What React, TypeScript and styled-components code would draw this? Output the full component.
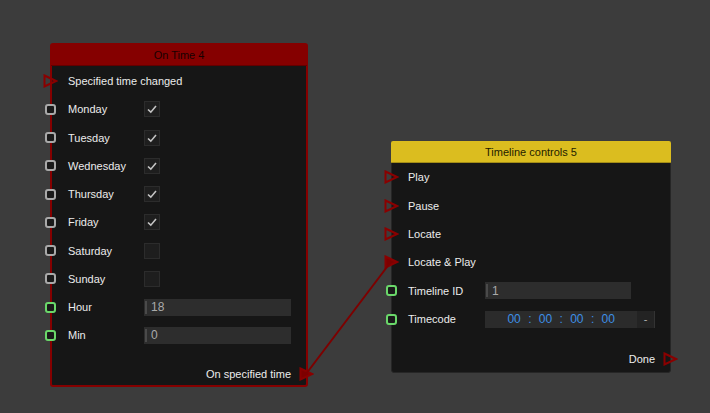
import React from 'react';
import styled, { createGlobalStyle } from 'styled-components';

const GlobalStyle = createGlobalStyle`
  html, body {
    margin: 0;
    padding: 0;
    background: #3c3c3c;
  }
  body {
    font-family: "Liberation Sans", Arial, sans-serif;
    font-size: 11px;
  }
`;

const Canvas = styled.div`
  position: relative;
  width: 710px;
  height: 413px;
  background: #3c3c3c;
  overflow: hidden;
`;

const Node = styled.div<{ $x: number; $y: number; $w: number; $h: number; $border: string; $bw: number }>`
  position: absolute;
  left: ${p => p.$x}px;
  top: ${p => p.$y}px;
  width: ${p => p.$w}px;
  height: ${p => p.$h}px;
  box-sizing: border-box;
  border: ${p => p.$bw}px solid ${p => p.$border};
  border-radius: 3px;
  background: #161616;
  display: flex;
  flex-direction: column;
`;

const Header = styled.div<{ $bg: string; $fg: string }>`
  height: 21px;
  flex: none;
  background: ${p => p.$bg};
  color: ${p => p.$fg};
  display: flex;
  align-items: center;
  justify-content: center;
  font-size: 11px;
  border-bottom: 1px solid rgba(0, 0, 0, 0.25);
  margin: -1px -1px 0;
  border-radius: 2px 2px 0 0;
`;

const Body = styled.div<{ $pt: number }>`
  flex: 1;
  display: flex;
  flex-direction: column;
  padding-top: ${p => p.$pt}px;
`;

const Row = styled.div<{ $h: number }>`
  position: relative;
  height: ${p => p.$h}px;
  flex: none;
  display: flex;
  align-items: center;
  padding-left: 16px;
  color: #ececec;
`;

const Label = styled.div`
  width: 76px;
  flex: none;
  white-space: nowrap;
`;

const OutRow = styled.div<{ $h: number; $pr: number }>`
  position: relative;
  margin-top: auto;
  height: ${p => p.$h}px;
  display: flex;
  align-items: center;
  justify-content: flex-end;
  padding-right: ${p => p.$pr}px;
  color: #ececec;
`;

const InPort = styled.div<{ $dx: number }>`
  position: absolute;
  left: ${p => p.$dx}px;
  top: 50%;
  transform: translateY(-50%);
  width: 15px;
  height: 14px;
  display: flex;
  align-items: center;
  justify-content: center;
`;

const OutPort = styled.div`
  position: absolute;
  right: -8px;
  top: 50%;
  transform: translateY(-50%);
  width: 15px;
  height: 14px;
  display: flex;
  align-items: center;
  justify-content: center;
`;

const Dot = styled.div<{ $color: string }>`
  width: 7px;
  height: 7px;
  border: 2px solid ${p => p.$color};
  border-radius: 3px;
  background: #1a1a1a;
`;

const Check = styled.div`
  width: 14px;
  height: 14px;
  border: 1px solid #2c2c2c;
  background: #1e1e1e;
  display: flex;
  align-items: center;
  justify-content: center;
`;

const Field = styled.div<{ $w: number }>`
  width: ${p => p.$w}px;
  height: 17px;
  background: #2d2d2d;
  display: flex;
  align-items: center;
  color: #aaaaaa;
  font-size: 12px;
  &::before {
    content: '';
    width: 2px;
    height: 13px;
    background: #4a4a4a;
    margin: 0 4px 0 1px;
  }
`;

const TimeBox = styled.div`
  display: flex;
  height: 17px;
  margin-left: 1px;
`;

const TimeDigits = styled.div`
  width: 152px;
  background: #2b2b2b;
  display: flex;
  align-items: center;
  justify-content: center;
  gap: 7.7px;
  color: #3d8fe6;
  font-size: 12px;
`;

const Pair = styled.span`
  width: 13px;
  text-align: center;
`;

const Colon = styled.span`
  width: 3px;
  text-align: center;
`;

const DashBtn = styled.div`
  width: 17px;
  background: #232323;
  border-right: 1px solid #333;
  color: #b0b0b0;
  display: flex;
  align-items: center;
  justify-content: center;
`;

const Wires = styled.svg`
  position: absolute;
  left: 0;
  top: 0;
  pointer-events: none;
`;

const Tri = ({ filled }: { filled?: boolean }) => (
  <svg width="15" height="14" viewBox="0 0 15 14">
    <polygon
      points="1.5,1.5 13,7 1.5,12.5"
      fill={filled ? '#7d0000' : 'none'}
      stroke="#8a0000"
      strokeWidth="2"
      strokeLinejoin="miter"
    />
  </svg>
);

const Tick = () => (
  <svg width="12" height="12" viewBox="0 0 12 12">
    <polyline points="2,6.5 4.8,9.2 10,3" fill="none" stroke="#c4c4c4" strokeWidth="1.6" />
  </svg>
);

const GRAY = '#a9a9a9';
const GREEN = '#6ad86a';

const days = [
  { name: 'Monday', on: true },
  { name: 'Tuesday', on: true },
  { name: 'Wednesday', on: true },
  { name: 'Thursday', on: true },
  { name: 'Friday', on: true },
  { name: 'Saturday', on: false },
  { name: 'Sunday', on: false },
];

export default function App() {
  return (
    <Canvas>
      <GlobalStyle />

      <Node $x={50} $y={43} $w={258} $h={344} $border="#850000" $bw={2}>
        <Header $bg="#850000" $fg="#180000">On Time 4</Header>
        <Body $pt={1}>
          <Row $h={28.25}>
            <InPort $dx={-9}><Tri /></InPort>
            <Label>Specified time changed</Label>
          </Row>
          {days.map(d => (
            <Row $h={28.25} key={d.name}>
              <InPort $dx={-9}><Dot $color={GRAY} /></InPort>
              <Label>{d.name}</Label>
              <Check>{d.on && <Tick />}</Check>
            </Row>
          ))}
          <Row $h={28.25}>
            <InPort $dx={-9}><Dot $color={GREEN} /></InPort>
            <Label>Hour</Label>
            <Field $w={147}>18</Field>
          </Row>
          <Row $h={28.25}>
            <InPort $dx={-9}><Dot $color={GREEN} /></InPort>
            <Label>Min</Label>
            <Field $w={147}>0</Field>
          </Row>
          <OutRow $h={22} $pr={15}>
            On specified time
            <OutPort><Tri filled /></OutPort>
          </OutRow>
        </Body>
      </Node>

      <Node $x={391} $y={141} $w={280} $h={232} $border="#262626" $bw={1}>
        <Header $bg="#dbbd1f" $fg="#231c00">Timeline controls 5</Header>
        <Body $pt={0}>
          <Row $h={28.4}>
            <InPort $dx={-8}><Tri /></InPort>
            <Label>Play</Label>
          </Row>
          <Row $h={28.4}>
            <InPort $dx={-8}><Tri /></InPort>
            <Label>Pause</Label>
          </Row>
          <Row $h={28.4}>
            <InPort $dx={-8}><Tri /></InPort>
            <Label>Locate</Label>
          </Row>
          <Row $h={28.4}>
            <InPort $dx={-8}><Tri filled /></InPort>
            <Label>Locate &amp; Play</Label>
          </Row>
          <Row $h={28.4}>
            <InPort $dx={-8}><Dot $color={GREEN} /></InPort>
            <Label>Timeline ID</Label>
            <Field $w={146} style={{ marginLeft: 1 }}>1</Field>
          </Row>
          <Row $h={28.4}>
            <InPort $dx={-8}><Dot $color={GREEN} /></InPort>
            <Label>Timecode</Label>
            <TimeBox>
              <TimeDigits>
                <Pair>00</Pair><Colon>:</Colon>
                <Pair>00</Pair><Colon>:</Colon>
                <Pair>00</Pair><Colon>:</Colon>
                <Pair>00</Pair>
              </TimeDigits>
              <DashBtn>-</DashBtn>
            </TimeBox>
          </Row>
          <OutRow $h={26} $pr={15}>
            Done
            <OutPort><Tri /></OutPort>
          </OutRow>
        </Body>
      </Node>

      <Wires width="710" height="413" viewBox="0 0 710 413">
        <line x1="306" y1="374" x2="390" y2="263" stroke="#7d0000" strokeWidth="2" />
      </Wires>
    </Canvas>
  );
}
